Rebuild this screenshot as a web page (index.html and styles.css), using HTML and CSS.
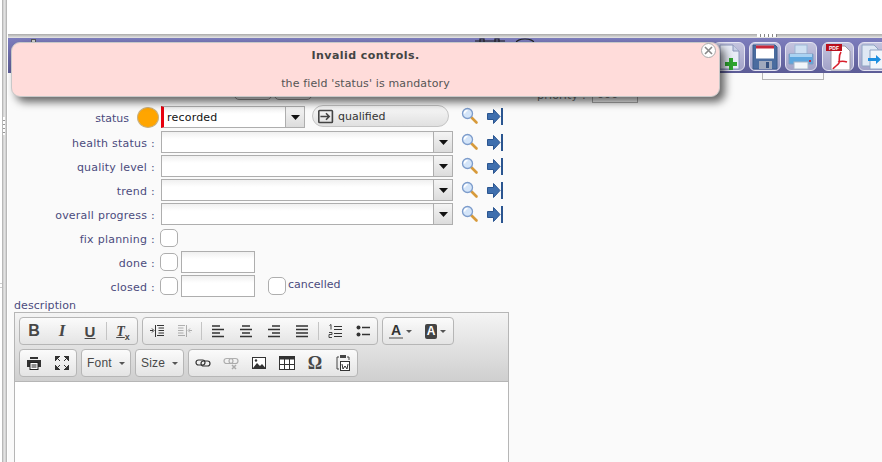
FILE: index.html
```html
<!DOCTYPE html>
<html lang="en">
<head>
<meta charset="utf-8">
<title>Invalid controls</title>
<link rel="stylesheet" href="styles.css">
</head>
<body>
<svg class="defs" width="0" height="0">
  <defs>
    <symbol id="mag" viewBox="0 0 18 18">
      <path d="M10.500 10.500l5 5" stroke="#d79a3a" stroke-width="2.600" stroke-linecap="round"/>
      <circle cx="6.500" cy="6.500" r="5" fill="#d4e5f9" stroke="#7d9ccb" stroke-width="1.300"/>
      <path d="M3.500 6.500a3 3 0 0 1 3-3" stroke="#fff" stroke-width="1.600" fill="none"/>
    </symbol>
    <symbol id="goto" viewBox="0 0 16 17">
      <path d="M0.500 5.500h6V1.500l6.500 7-6.500 7v-4h-6z" fill="#3f6fae" stroke="#2a5590"/>
      <rect x="14" y="0" width="2" height="17" fill="#2a5590"/>
    </symbol>
    <symbol id="drop" viewBox="0 0 9 5">
      <path d="M0 0h9L4.500 5z" fill="#111"/>
    </symbol>
  </defs>
</svg>

<div class="page">
  <div class="side"><span class="side-bar"><span class="side-grip"></span></span></div>
  <div class="main">
    <div class="top"></div>
    <div class="splitter"><span class="grip"></span></div>
    <header class="toolbar">
      <span class="tb-handle"></span>
      <span class="tb-peek">
        <svg width="60" height="6" viewBox="0 0 60 6"><path d="M0 3h30M5 4V1h4v3M20 4V1h4v3" fill="none" stroke="#222" stroke-width="1.200"/><path d="M41 5a9 4 0 0 1 18 0" fill="none" stroke="#222" stroke-width="1.200"/></svg>
      </span>
      <span class="tb-btn">
        <svg width="24" height="26" viewBox="0 0 24 26"><path d="M3 1h13l6 6v18H3z" fill="#e8ecf6" stroke="#8a94b8"/><path d="M16 1v6h6" fill="#c9d0e6" stroke="#8a94b8"/><path d="M12 14h4v4h4v4h-4v4h-4v-4H8v-4h4z" fill="#2fa52f"/></svg>
      </span>
      <span class="tb-btn">
        <svg width="26" height="26" viewBox="0 0 26 26"><path d="M1 1h22l2 2v22H1z" fill="#4a6c9f" stroke="#3a5a8a"/><rect x="4" y="1.500" width="18" height="13" fill="#fff"/><rect x="4" y="1.500" width="18" height="3" fill="#c8283a"/><rect x="7" y="17" width="13" height="8" fill="#9fa9bd"/><rect x="14" y="18" width="3" height="6" fill="#34507e"/></svg>
      </span>
      <span class="tb-btn">
        <svg width="26" height="26" viewBox="0 0 26 26"><rect x="7" y="1" width="12" height="9" fill="#cfe0f2" stroke="#9db7d6"/><path d="M1 10h24v10H1z" fill="#5ea6de" stroke="#7f9dc0"/><rect x="2" y="10" width="22" height="3" fill="#a9d2f2"/><rect x="6" y="18" width="14" height="7" fill="#f2f5fa" stroke="#a8b6c8"/><rect x="21" y="16" width="2" height="2" fill="#c8283a"/></svg>
      </span>
      <span class="tb-btn pdf">
        <svg width="26" height="28" viewBox="0 0 26 28"><path d="M6 3h14l5 5v19H6z" fill="#fff" stroke="#9a9aa5"/><rect x="1" y="1" width="16" height="7" fill="#b8101c"/><text x="4" y="7" class="pdf-text">PDF</text><path d="M16 9c-3 4-1 8-2 11-1 2-5 4-6 6M13 19c3-1 6-1 9 0" fill="none" stroke="#d8202c" stroke-width="1.600"/></svg>
      </span>
      <span class="tb-btn">
        <svg width="26" height="26" viewBox="0 0 26 26"><path d="M1 1h12l4 4v17H1z" fill="#dfe8f4" stroke="#8fa4c4"/><path d="M9 6h12l4 4v15H9z" fill="#f2f6fb" stroke="#8fa4c4"/><path d="M7 14h8v-3l5 4.500-5 4.500v-3H7z" fill="#1d8fe0"/></svg>
      </span>
    </header>
    <div class="sub">
      <div class="sub-box"></div>
      <div class="priority">
        <span class="pri-label">priority :</span>
        <span class="pri-input">000</span>
      </div>
      <div class="tabs"><span class="tab"></span><span class="tab"></span></div>
    </div>

    <form class="form">
      <div class="row row-status">
        <span class="label status-label">status</span>
        <span class="dot"></span>
        <span class="select required"><span class="val">recorded</span><span class="arrow"><svg width="9" height="5"><use href="#drop"/></svg></span></span>
        <span class="next">
          <svg width="16" height="15" viewBox="0 0 20 18"><path d="M7 1.500H2a1 1 0 0 0-1 1v13a1 1 0 0 0 1 1h15a1 1 0 0 0 1-1v-13a1 1 0 0 0-1-1H7" fill="none" stroke="#444" stroke-width="2"/><path d="M3 9h11M10 5l4 4-4 4" fill="none" stroke="#444" stroke-width="2"/></svg>
          <span class="next-text">qualified</span>
        </span>
        <span class="acts"><svg width="18" height="18"><use href="#mag"/></svg><svg width="16" height="17"><use href="#goto"/></svg></span>
      </div>
      <div class="row">
        <span class="label">health status :</span>
        <span class="select"><span class="val"></span><span class="arrow"><svg width="9" height="5"><use href="#drop"/></svg></span></span>
        <span class="acts"><svg width="18" height="18"><use href="#mag"/></svg><svg width="16" height="17"><use href="#goto"/></svg></span>
      </div>
      <div class="row">
        <span class="label">quality level :</span>
        <span class="select"><span class="val"></span><span class="arrow"><svg width="9" height="5"><use href="#drop"/></svg></span></span>
        <span class="acts"><svg width="18" height="18"><use href="#mag"/></svg><svg width="16" height="17"><use href="#goto"/></svg></span>
      </div>
      <div class="row">
        <span class="label">trend :</span>
        <span class="select"><span class="val"></span><span class="arrow"><svg width="9" height="5"><use href="#drop"/></svg></span></span>
        <span class="acts"><svg width="18" height="18"><use href="#mag"/></svg><svg width="16" height="17"><use href="#goto"/></svg></span>
      </div>
      <div class="row">
        <span class="label">overall progress :</span>
        <span class="select"><span class="val"></span><span class="arrow"><svg width="9" height="5"><use href="#drop"/></svg></span></span>
        <span class="acts"><svg width="18" height="18"><use href="#mag"/></svg><svg width="16" height="17"><use href="#goto"/></svg></span>
      </div>
      <div class="row">
        <span class="label">fix planning :</span>
        <span class="check"></span>
      </div>
      <div class="row">
        <span class="label">done :</span>
        <span class="check"></span>
        <span class="date"></span>
      </div>
      <div class="row">
        <span class="label">closed :</span>
        <span class="check"></span>
        <span class="date"></span>
        <span class="check cancel"></span>
        <span class="cancel-text">cancelled</span>
      </div>
    </form>

    <div class="desc-label">description</div>
    <section class="editor">
      <div class="ed-top">
        <div class="ed-row">
          <div class="grp">
            <span class="b"><b class="t-b">B</b></span>
            <span class="b"><i class="t-i">I</i></span>
            <span class="b"><u class="t-u">U</u></span>
            <span class="sep"></span>
            <span class="b"><span class="t-x"><i>T</i><sub>x</sub></span></span>
          </div>
          <div class="grp">
            <span class="b"><svg width="14" height="14" viewBox="0 0 14 14"><path d="M7 1.500h7M8.500 4h5.500M8.500 6.500h5.500M8.500 9h5.500M7 11.500h7M5.500 1v12" stroke="#333"/><path d="M0 6.500h3M2 4.500l2 2-2 2" stroke="#333" fill="none"/></svg></span>
            <span class="b dim"><svg width="14" height="14" viewBox="0 0 14 14"><path d="M0 1.500h7M0 4h5.500M0 6.500h5.500M0 9h5.500M0 11.500h7M8.500 1v12" stroke="#333"/><path d="M14 6.500h-3M12 4.500l-2 2 2 2" stroke="#333" fill="none"/></svg></span>
            <span class="sep"></span>
            <span class="b"><svg width="14" height="14" viewBox="0 0 14 14"><path d="M1 2h8M1 5.500h12M1 9h8M1 12.500h12" stroke="#333" stroke-width="1.600"/></svg></span>
            <span class="b"><svg width="14" height="14" viewBox="0 0 14 14"><path d="M3 2h8M1 5.500h12M3 9h8M1 12.500h12" stroke="#333" stroke-width="1.600"/></svg></span>
            <span class="b"><svg width="14" height="14" viewBox="0 0 14 14"><path d="M5 2h8M1 5.500h12M5 9h8M1 12.500h12" stroke="#333" stroke-width="1.600"/></svg></span>
            <span class="b"><svg width="14" height="14" viewBox="0 0 14 14"><path d="M1 2h12M1 5.500h12M1 9h12M1 12.500h12" stroke="#333" stroke-width="1.600"/></svg></span>
            <span class="sep"></span>
            <span class="b"><svg width="14" height="14" viewBox="0 0 14 14"><path d="M6 2.500h8M6 5.500h8M6 9.500h8M6 12.500h8" stroke="#333"/><path d="M1.500 1.500l1.500-1v5M1 8.500h3v2H1v3h3" stroke="#333" fill="none" stroke-width=".9"/></svg></span>
            <span class="b"><svg width="14" height="14" viewBox="0 0 14 14"><circle cx="2.500" cy="3.500" r="2" fill="#333"/><circle cx="2.500" cy="10.500" r="2" fill="#333"/><path d="M6 3.500h8M6 10.500h8" stroke="#333" stroke-width="1.300"/></svg></span>
          </div>
          <div class="grp">
            <span class="b wide"><span class="t-a">A</span><span class="mini"></span></span>
            <span class="b wide"><span class="t-abg">A</span><span class="mini"></span></span>
          </div>
        </div>
        <div class="ed-row">
          <div class="grp">
            <span class="b"><svg width="16" height="16" viewBox="0 0 16 16"><path d="M4 2h8v2H4z" fill="#333"/><path d="M1 5h14v7H1z" fill="#333"/><rect x="4" y="7.500" width="8" height="7" fill="#fff" stroke="#222"/><path d="M5.500 10h5M5.500 12h5" stroke="#222"/></svg></span>
            <span class="b"><svg width="14" height="14" viewBox="0 0 14 14"><path d="M0 0h5L0 5zM14 0v5L9 0zM0 14V9l5 5zM14 14H9l5-5zM2 2l3 3M12 2L9 5M2 12l3-3M12 12L9 9" fill="#333" stroke="#333"/></svg></span>
          </div>
          <div class="grp combo"><span class="combo-text">Font</span><span class="mini"></span></div>
          <div class="grp combo combo-size"><span class="combo-text">Size</span><span class="mini"></span></div>
          <div class="grp">
            <span class="b"><svg width="16" height="16" viewBox="0 0 16 16"><rect x="1" y="5" width="9" height="5" rx="2.500" fill="none" stroke="#333" stroke-width="1.200"/><rect x="6" y="6" width="9" height="5" rx="2.500" fill="none" stroke="#333" stroke-width="1.200"/></svg></span>
            <span class="b dim"><svg width="16" height="16" viewBox="0 0 16 16"><rect x="1" y="3.500" width="9" height="5" rx="2.500" fill="none" stroke="#333" stroke-width="1.200"/><rect x="6" y="3.500" width="9" height="5" rx="2.500" fill="none" stroke="#333" stroke-width="1.200"/><path d="M9 10l4 4M13 10l-4 4" stroke="#333" stroke-width="1.500"/></svg></span>
            <span class="b"><svg width="16" height="16" viewBox="0 0 16 16"><rect x="1.500" y="2.500" width="13" height="11" fill="#fff" stroke="#333"/><path d="M2 13l4-5 3 3 2-2 3.500 4z" fill="#333"/><circle cx="5" cy="5.500" r="1.200" fill="#333"/></svg></span>
            <span class="b"><svg width="16" height="16" viewBox="0 0 16 16"><rect x="0.500" y="1.500" width="15" height="13" fill="#fff" stroke="#333"/><rect x="0.500" y="1.500" width="15" height="3" fill="#333"/><path d="M5.500 4v10M10.500 4v10M1 9.500h14" stroke="#333"/></svg></span>
            <span class="b"><span class="t-o">Ω</span></span>
            <span class="b"><svg width="14" height="18" viewBox="0 0 14 18"><path d="M3 3H1v12h2" fill="none" stroke="#444"/><path d="M11 3h2v3" fill="none" stroke="#444"/><rect x="4" y="1" width="6" height="3" fill="#444"/><rect x="4.500" y="7.500" width="9" height="9" fill="#fff" stroke="#333"/><path d="M6 10l1 5 2-3 2 3 1-5" fill="none" stroke="#333"/></svg></span>
          </div>
        </div>
      </div>
      <div class="ed-body"></div>
    </section>
  </div>
</div>

<div class="popup">
  <button class="close" type="button" aria-label="close">
    <svg width="9" height="9" viewBox="0 0 9 9"><path d="M1 1l7 7M8 1L1 8" stroke="#888" stroke-width="1.600"/></svg>
  </button>
  <div class="pop-title">Invalid controls.</div>
  <div class="pop-msg">the field 'status' is mandatory</div>
</div>
</body>
</html>
```

FILE: styles.css
```css
* { box-sizing: border-box; }
html, body { margin: 0; height: 100%; overflow: hidden; background: #fff; }
body { font-family: "DejaVu Sans", sans-serif; font-size: 11px; color: #4b4b7d; position: relative; }
.defs { position: absolute; }
.page { display: flex; height: 462px; overflow: hidden; }
.side { width: 8px; flex: none; padding-left: 2px; background: linear-gradient(#ccc, #ccc) 0 283px / 2px 1px no-repeat, linear-gradient(#ccc, #ccc) 0 287px / 2px 1px no-repeat, #fff; }
.side-bar { display: block; width: 5px; height: 100%; background: linear-gradient(90deg, #aaa, #e2e2e2 40%, #e2e2e2 60%, #aaa); position: relative; }
.side-grip { position: absolute; left: 1px; top: 117px; width: 2px; height: 18px; background: repeating-linear-gradient(#fff 0 3px, #999 3px 4px); }
.main { flex: 1; min-width: 0; background: #fafafa; display: flex; flex-direction: column; }
.top { height: 34px; background: #fff; flex: none; }
.splitter { height: 4px; flex: none; background: linear-gradient(#aaa, #c8c8c8 50%, #e8e8e8); display: flex; justify-content: flex-end; padding-right: 105px; }
.grip { width: 20px; height: 3px; background: repeating-linear-gradient(90deg, #fff 0 3px, #888 3px 4px); }
.toolbar { height: 35px; flex: none; background: linear-gradient(#7d7dbd, #5c5c96); display: flex; align-items: flex-start; gap: 4px; padding-left: 705px; padding-top: 4px; overflow: hidden; position: relative; }
.tb-handle { position: absolute; left: 23px; top: 1px; width: 5px; height: 5px; border: 1px solid #555; background: #ccc; }
.tb-peek { position: absolute; left: 467px; top: 0; height: 6px; line-height: 0; }
.tb-btn { width: 32px; height: 29px; flex: none; border: 1px solid #e4e4f2; border-radius: 6px; background: linear-gradient(#c4c4de, #a2a2c8); display: flex; align-items: center; justify-content: center; }
.tb-btn.pdf { margin-left: 1px; }
.pdf-text { font: 700 5px "Liberation Sans", sans-serif; fill: #fff; }
.sub { height: 32px; flex: none; position: relative; }
.sub-box { position: absolute; left: 754px; top: 0; width: 62px; height: 7px; border: 1px solid #b5b5b5; border-top: 0; }
.priority { position: absolute; left: 529px; top: 14px; display: flex; gap: 6px; align-items: center; color: #777; letter-spacing: .2px; }
.pri-input { width: 46px; height: 16px; border: 1px solid #aaa; padding-left: 4px; color: #777; line-height: 14px; }
.tabs { position: absolute; left: 226px; top: 19px; display: flex; gap: 2px; }
.tab { width: 38px; height: 8px; border: 1px solid #999; border-radius: 0 0 5px 5px; }
.form { display: flex; flex-direction: column; flex: none; }
.row { height: 24px; display: flex; align-items: center; flex: none; }
.row-status { height: 25px; padding-bottom: 1px; }
.label { width: 147px; text-align: right; flex: none; margin-right: 6px; padding-top: 2px; letter-spacing: .2px; word-spacing: .3px; }
.status-label { width: 121px; margin-right: 0; letter-spacing: 0; }
.dot { width: 22px; height: 21px; margin: 1px 2px 0 8px; border-radius: 50%; background: #ffa500; border: 1px solid #c8b080; flex: none; }
.select { width: 292px; height: 22px; border: 1px solid #aeaeae; background: linear-gradient(#f0f0f0, #fff 35%); display: flex; flex: none; }
.select.required { width: 144px; border-left: 3px solid #e8000d; }
.val { flex: 1; color: #111; padding-left: 3px; line-height: 21px; letter-spacing: .2px; }
.arrow { width: 19px; border-left: 1px solid #aeaeae; background: linear-gradient(#f4f4f4, #dcdcdc); display: flex; align-items: center; justify-content: center; }
.next { width: 137px; height: 22px; margin: 0 0 2px 7px; border: 1px solid #c4c4c4; border-radius: 11px; background: linear-gradient(#f8f8f8, #e0e0e0); display: flex; align-items: center; gap: 4px; padding-left: 5px; color: #333; flex: none; }
.acts { display: flex; align-items: center; gap: 8px; margin-left: 8px; flex: none; }
.next + .acts { margin-left: 12px; margin-bottom: 2px; }
.check { width: 18px; height: 18px; margin-left: -1px; border: 1px solid #aeaeae; border-radius: 5px; background: #fff; flex: none; }
.date { width: 74px; height: 22px; margin-left: 3px; border: 1px solid #aeaeae; background: linear-gradient(#f0f0f0, #fff 35%); flex: none; }
.check.cancel { margin-left: 13px; }
.cancel-text { margin: -4px 0 0 2px; }
.desc-label { height: 13px; line-height: 16px; margin: 0 0 1px 6px; flex: none; letter-spacing: .08px; }
.editor { width: 495px; margin-left: 6px; flex: 1; border: 1px solid #b6b6b6; border-bottom: 0; background: #fff; display: flex; flex-direction: column; }
.ed-top { height: 69px; flex: none; border-bottom: 1px solid #b6b6b6; background: linear-gradient(#f4f4f4, #cfcfcf); padding: 4px 4px 0; display: flex; flex-direction: column; gap: 4px; }
.ed-row { display: flex; gap: 4px; height: 28px; flex: none; }
.grp { height: 28px; border: 1px solid #b6b6b6; border-radius: 4px; background: linear-gradient(#fbfbfb, #e4e4e4); display: flex; align-items: center; flex: none; }
.b { width: 28px; height: 26px; display: flex; align-items: center; justify-content: center; flex: none; color: #474747; }
.dim { opacity: .35; }
.sep { width: 1px; height: 18px; background: #c4c4c4; flex: none; margin: 0 2px; }
.t-b, .t-u { font: 700 16px "Liberation Sans", sans-serif; color: #474747; }
.t-i { font: italic 700 17px "Liberation Serif", serif; color: #474747; }
.t-u { text-decoration: underline; font-size: 15px; }
.t-x { font: 700 14px "Liberation Sans", sans-serif; color: #474747; }
.t-x i { font-family: "Liberation Serif", serif; text-decoration: underline; }
.t-x sub { font-size: 9px; line-height: 0; }
.wide { width: 35px; gap: 3px; }
.t-a { font: 700 14px "Liberation Sans", sans-serif; color: #333; border-bottom: 2px solid #999; line-height: 14px; padding: 0 2px; }
.t-abg { font: 700 12px "Liberation Sans", sans-serif; color: #fff; background: #444; border-radius: 2px; padding: 1px 2px; line-height: 13px; }
.mini { width: 0; height: 0; border: 3px solid transparent; border-top-color: #555; border-bottom: 0; flex: none; }
.combo { gap: 7px; padding-left: 5px; font: 12px "Liberation Sans", sans-serif; color: #484848; width: 50px; }
.combo-size { width: 49px; }
.combo-text { flex: none; letter-spacing: .2px; }
.t-o { font: 700 18px "Liberation Serif", serif; color: #474747; }
.ed-body { flex: 1; background: #fff; }
.popup { position: absolute; left: 11px; top: 42px; width: 709px; height: 55px; background: #ffdcda; border: 1px solid #c8c8c8; border-radius: 9px; box-shadow: 5px 5px 8px rgba(0,0,0,.6); text-align: center; color: #555; }
.pop-title { font-weight: 700; color: #444; margin-top: 6px; line-height: 14px; letter-spacing: .45px; }
.pop-msg { margin-top: 14px; line-height: 14px; letter-spacing: .13px; }
.close { position: absolute; right: 3px; top: 0; width: 15px; height: 15px; padding: 0; border: 1px solid #aaa; border-radius: 50%; background: #fff; display: flex; align-items: center; justify-content: center; }
```
